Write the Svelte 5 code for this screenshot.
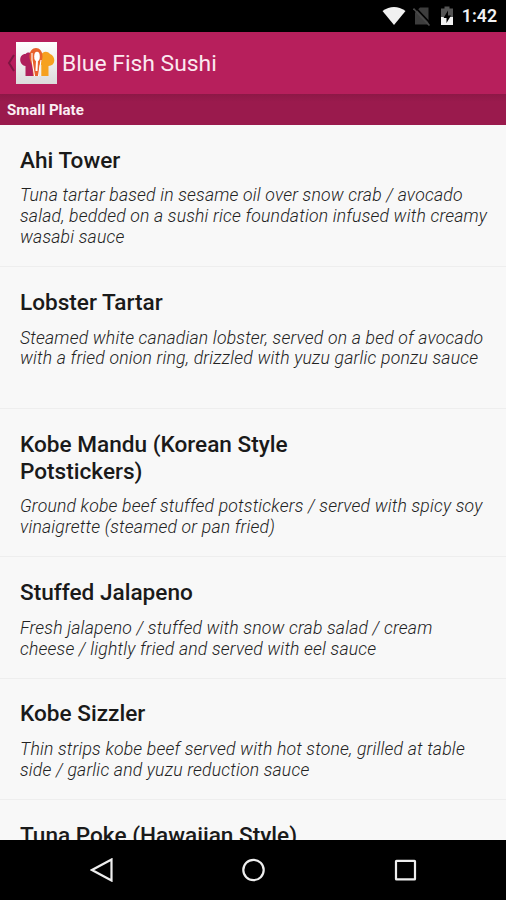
<script>
    const menu = [
        {
            name: 'Ahi Tower',
            lines: ['Tuna tartar based in sesame oil over snow crab / avocado', 'salad, bedded on a sushi rice foundation infused with creamy', 'wasabi sauce'],
        },
        {
            name: 'Lobster Tartar',
            lines: ['Steamed white canadian lobster, served on a bed of avocado', 'with a fried onion ring, drizzled with yuzu garlic ponzu sauce', ''],
        },
        {
            name: 'Kobe Mandu (Korean Style Potstickers)',
            lines: ['Ground kobe beef stuffed potstickers / served with spicy soy', 'vinaigrette (steamed or pan fried)'],
        },
        {
            name: 'Stuffed Jalapeno',
            lines: ['Fresh jalapeno / stuffed with snow crab salad / cream', 'cheese / lightly fried and served with eel sauce'],
        },
        {
            name: 'Kobe Sizzler',
            lines: ['Thin strips kobe beef served with hot stone, grilled at table', 'side / garlic and yuzu reduction sauce'],
        },
        { name: 'Tuna Poke (Hawaiian Style)', lines: [] },
    ]
</script>

<div class="screen">
    <div class="status-bar">
        <svg class="wifi" width="24" height="20" viewBox="0 0 24 20">
            <path d="M0.5 5Q12 -3 23.5 5L12 19Z" fill="#f1f1f1" />
        </svg>
        <svg class="no-sim" width="18" height="20" viewBox="0 0 18 20">
            <path d="M7 1.5H15.5V18.5H2V6.5Z" fill="#3d3d3d" />
            <path d="M2.5 1.5L18 18" stroke="#000" stroke-width="1.6" />
            <path d="M0.5 2.5L16.5 19.5" stroke="#4a4a4a" stroke-width="1.6" />
        </svg>
        <svg class="battery" width="14" height="20" viewBox="0 0 14 20">
            <path d="M4.5 0.5H9.5V2.5H13V11H1V2.5H4.5Z" fill="#555" />
            <path d="M1 11H13V19H1Z" fill="#f1f1f1" />
            <path d="M8 4.5L3.5 12H6.5V17L11 9.5H8Z" fill="#000" />
        </svg>
        <span class="time">1:42</span>
    </div>

    <header class="action-bar">
        <svg class="up" width="8" height="20" viewBox="0 0 8 20">
            <path d="M7 2L2 10L7 18" fill="none" stroke="#7d1641" stroke-width="2" />
        </svg>
        <svg class="logo" width="41" height="42" viewBox="0 0 41 42">
            <defs>
                <linearGradient id="tile" x1="0" y1="0" x2="0" y2="1">
                    <stop offset="0" stop-color="#fff" />
                    <stop offset="1" stop-color="#dcdcdc" />
                </linearGradient>
            </defs>
            <rect width="41" height="42" fill="url(#tile)" />
            <path d="M9.5 34V24C2.5 23 2.5 12 9.5 12C12.5 9 16 11 17 14V34Z" fill="#b0205c" />
            <path d="M25 34V13C26 10 31 8 34 12C40 14 40 24 32.5 24V34Z" fill="#f6a11f" />
            <path d="M13.5 15C13 3 27 3 26.5 15C26 20 24 22 23.5 26L23 34H17L16.5 26C16 22 14 20 13.5 15Z" fill="#e8622c" />
            <ellipse cx="21" cy="14.5" rx="2.8" ry="4.8" fill="#fff" />
            <path d="M21 18L20.5 29" fill="none" stroke="#fff" stroke-width="2" />
            <path d="M16 11V18L18.5 34M25 18L22.5 34" fill="none" stroke="#fff" stroke-width="1.1" />
            <path d="M24.5 23V34" stroke="#f4f0ee" stroke-width="1.6" />
        </svg>
        <h1>Blue Fish Sushi</h1>
    </header>

    <div class="section">Small Plate</div>

    <main class="menu">
        {#each menu as item}
            <article class="item">
                <h2>{item.name}</h2>
                <p>
                    {#each item.lines as line}
                        <span>{line}</span>
                    {/each}
                </p>
            </article>
        {/each}
    </main>

    <nav class="nav-bar">
        <svg width="24" height="24" viewBox="0 0 24 24">
            <path d="M21.5 1.5V22.5L2 12Z" />
        </svg>
        <svg width="24" height="24" viewBox="0 0 24 24">
            <circle cx="11.5" cy="12" r="10.2" />
        </svg>
        <svg width="24" height="24" viewBox="0 0 24 24">
            <rect x="3" y="2.8" width="19" height="18.6" rx="0.5" />
        </svg>
    </nav>
</div>

<style>
    :global(body) {
        margin: 0;
    }

    .screen {
        display: flex;
        flex-direction: column;
        height: 900px;
        overflow: hidden;
        background: #f8f8f8;
        font-family: Roboto, "Liberation Sans", sans-serif;
    }

    .status-bar {
        display: flex;
        align-items: center;
        justify-content: flex-end;
        flex: none;
        box-sizing: border-box;
        height: 32px;
        padding-right: 9px;
        background: #000;
    }

    .no-sim {
        margin-left: 7px;
    }

    .battery {
        margin-left: 9px;
    }

    .time {
        margin-left: 8px;
        color: #f1f1f1;
        font-size: 17.7px;
        font-weight: 600;
        line-height: 34px;
    }

    .action-bar {
        display: flex;
        align-items: center;
        flex: none;
        height: 62px;
        padding-left: 7px;
        background: #b71f5c;
    }

    .logo {
        margin-left: 1px;
    }

    h1 {
        margin: 0 0 0 5px;
        color: #fbe9f0;
        font-size: 22.9px;
        font-weight: 400;
    }

    .section {
        flex: none;
        box-sizing: border-box;
        height: 31px;
        padding-left: 7px;
        background: linear-gradient(#8d1846, #9a1a4d 25%);
        color: #fbeef3;
        font-size: 15px;
        font-weight: 700;
        line-height: 33px;
    }

    .menu {
        flex: 1;
        min-height: 0;
        overflow: hidden;
    }

    .item {
        padding: 22.6px 0 18.5px 20px;
        border-bottom: 1px solid #eeeeee;
    }

    h2 {
        width: 320px;
        margin: 0 0 11.1px;
        color: #1a1a1a;
        font-size: 22.6px;
        font-weight: 500;
        line-height: 26.8px;
    }

    p {
        margin: 0;
        color: #222222;
        font-size: 17.6px;
        font-style: italic;
        font-weight: 320;
        letter-spacing: 0.19px;
        line-height: 20.7px;
    }

    p span {
        display: block;
        min-height: 20.7px;
        white-space: nowrap;
    }

    .nav-bar {
        display: flex;
        align-items: center;
        justify-content: space-between;
        flex: none;
        box-sizing: border-box;
        height: 60px;
        padding: 0 89px 0 90px;
        background: #000;
    }

    .nav-bar svg {
        fill: none;
        stroke: #eeeeee;
        stroke-width: 2.2;
    }
</style>
